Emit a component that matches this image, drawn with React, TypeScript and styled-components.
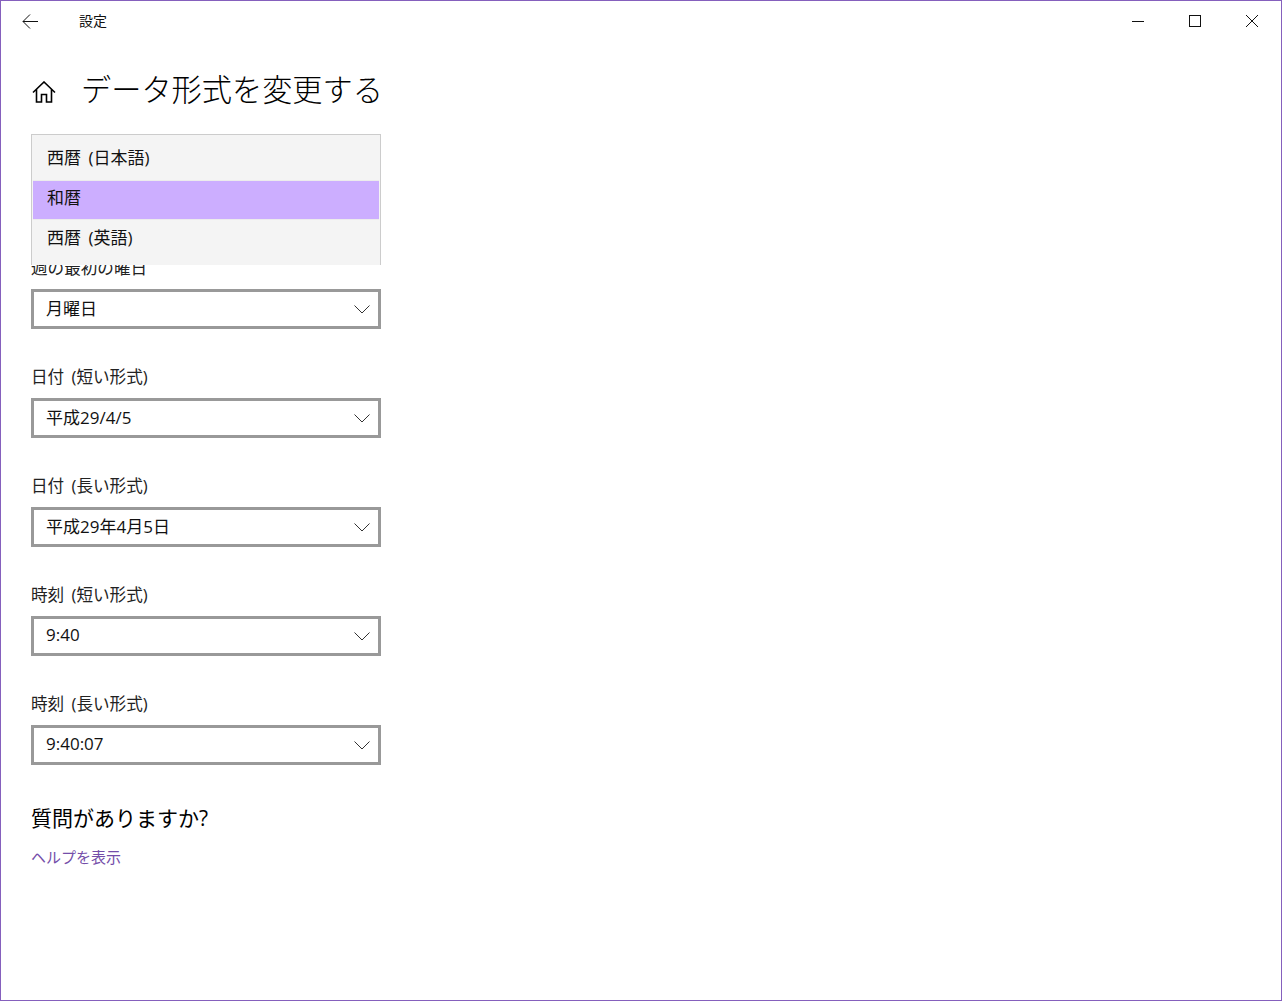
import styled, { createGlobalStyle } from "styled-components";

const fields = [
  { label: "週の最初の曜日", value: "月曜日" },
  { label: "日付 (短い形式)", value: "平成29/4/5" },
  { label: "日付 (長い形式)", value: "平成29年4月5日" },
  { label: "時刻 (短い形式)", value: "9:40" },
  { label: "時刻 (長い形式)", value: "9:40:07" },
];

const calendars = ["西暦 (日本語)", "和暦", "西暦 (英語)"];

const App = () => {
  return (
    <>
      <GlobalStyle />
      <Window>
        <TitleBar>
          <BackButton>
            <svg width="16" height="15" viewBox="0 0 16 15">
              <path d="M16 7.5H1M8 0.5L1 7.5L8 14.5" stroke="#111" fill="none" />
            </svg>
          </BackButton>
          <AppName>設定</AppName>
          <WindowButtons>
            <WindowButton>
              <svg width="12" height="12" viewBox="0 0 12 12">
                <path d="M0 6.5H12" stroke="#111" fill="none" />
              </svg>
            </WindowButton>
            <WindowButton>
              <svg width="12" height="12" viewBox="0 0 12 12">
                <rect x="0.5" y="0.5" width="11" height="11" stroke="#111" fill="none" />
              </svg>
            </WindowButton>
            <WindowButton>
              <svg width="12" height="12" viewBox="0 0 12 12">
                <path d="M0 0L12 12M12 0L0 12" stroke="#111" fill="none" />
              </svg>
            </WindowButton>
          </WindowButtons>
        </TitleBar>

        <Content>
          <Header>
            <HomeIcon width="24" height="22" viewBox="0 0 24 22">
              <path
                d="M1 11.5L12 1L23 11.5M4.5 8.5V21H9.5V13.5H14.5V21H19.5V8.5"
                stroke="#000"
                strokeWidth="1.6"
                fill="none"
              />
            </HomeIcon>
            <PageTitle>データ形式を変更する</PageTitle>
          </Header>

          <Fields>
            {fields.map((item) => (
              <Field key={item.label}>
                <Label>{item.label}</Label>
                <Select>
                  <SelectValue>{item.value}</SelectValue>
                  <svg width="16" height="9" viewBox="0 0 16 9">
                    <path d="M0.5 0.5L8 8L15.5 0.5" stroke="#333" fill="none" />
                  </svg>
                </Select>
              </Field>
            ))}
          </Fields>

          <HelpTitle>質問がありますか?</HelpTitle>
          <HelpLink>ヘルプを表示</HelpLink>

          <Flyout>
            {calendars.map((name, index) => (
              <FlyoutItem key={name} $selected={index === 1}>
                <FlyoutText>{name}</FlyoutText>
              </FlyoutItem>
            ))}
          </Flyout>
        </Content>
      </Window>
    </>
  );
};

const GlobalStyle = createGlobalStyle`
  html, body {
    margin: 0;
    padding: 0;
    background: #fff;
  }

  body {
    font-family: "Open Sans", "Noto Sans CJK JP", sans-serif;
    color: #111;
  }
`;

const Window = styled.div`
  box-sizing: border-box;
  width: 1282px;
  height: 1001px;
  border: 1px solid #8560bd;
  background: #fff;
  overflow: hidden;
`;

const TitleBar = styled.div`
  display: flex;
  align-items: center;
  height: 40px;
`;

const BackButton = styled.div`
  display: flex;
  align-items: center;
  justify-content: center;
  width: 58px;
  height: 40px;
`;

const AppName = styled.div`
  margin: 0 0 2px 20px;
  font-size: 14px;
`;

const WindowButtons = styled.div`
  display: flex;
  margin-left: auto;
  margin-right: 1px;
`;

const WindowButton = styled.div`
  display: flex;
  align-items: center;
  justify-content: center;
  width: 57px;
  height: 40px;
`;

const Content = styled.div`
  position: relative;
  padding: 0 30px;
`;

const Header = styled.div`
  display: flex;
  align-items: center;
  height: 93px;
`;

const HomeIcon = styled.svg`
  margin-left: 1px;
  margin-top: 8px;
`;

const PageTitle = styled.h1`
  margin: 4px 0 0 25px;
  font-size: 30.2px;
  font-weight: 300;
  line-height: 40px;
  color: #000;
`;

const Fields = styled.div`
  display: flex;
  flex-direction: column;
  gap: 36px;
  padding-top: 122px;
`;

const Field = styled.div`
  display: flex;
  flex-direction: column;
  gap: 9px;
`;

const Label = styled.label`
  font-size: 16.6px;
  line-height: 24px;
  word-spacing: 3px;
  color: #222;
`;

const Select = styled.div`
  box-sizing: border-box;
  display: flex;
  align-items: center;
  justify-content: space-between;
  width: 350px;
  height: 40px;
  padding: 0 8px 0 12px;
  border: 3px solid #999;
`;

const SelectValue = styled.span`
  margin-bottom: 3px;
  font-size: 17px;
`;

const HelpTitle = styled.h2`
  margin: 37px 0 0;
  font-size: 21px;
  font-weight: 400;
  line-height: 32px;
  color: #000;
`;

const HelpLink = styled.a`
  display: block;
  margin-top: 11px;
  font-size: 15px;
  line-height: 24px;
  color: #744da9;
`;

const Flyout = styled.div`
  position: absolute;
  top: 93px;
  left: 30px;
  box-sizing: border-box;
  display: flex;
  flex-direction: column;
  width: 350px;
  height: 131px;
  padding: 5px 1px 0;
  border: 1px solid #ccc;
  border-bottom: none;
  background: #f4f4f4;
`;

const FlyoutItem = styled.div<{ $selected?: boolean }>`
  box-sizing: border-box;
  display: flex;
  align-items: center;
  flex: none;
  height: 40px;
  padding-left: 14px;
  border-top: 1px solid ${(props) => (props.$selected ? "#ececec" : "transparent")};
  border-bottom: 1px solid ${(props) => (props.$selected ? "#ececec" : "transparent")};
  background: ${(props) => (props.$selected ? "#ccaeff" : "transparent")};
`;

const FlyoutText = styled.span`
  margin-bottom: 7px;
  font-size: 17px;
  word-spacing: 3px;
`;

export default App;
